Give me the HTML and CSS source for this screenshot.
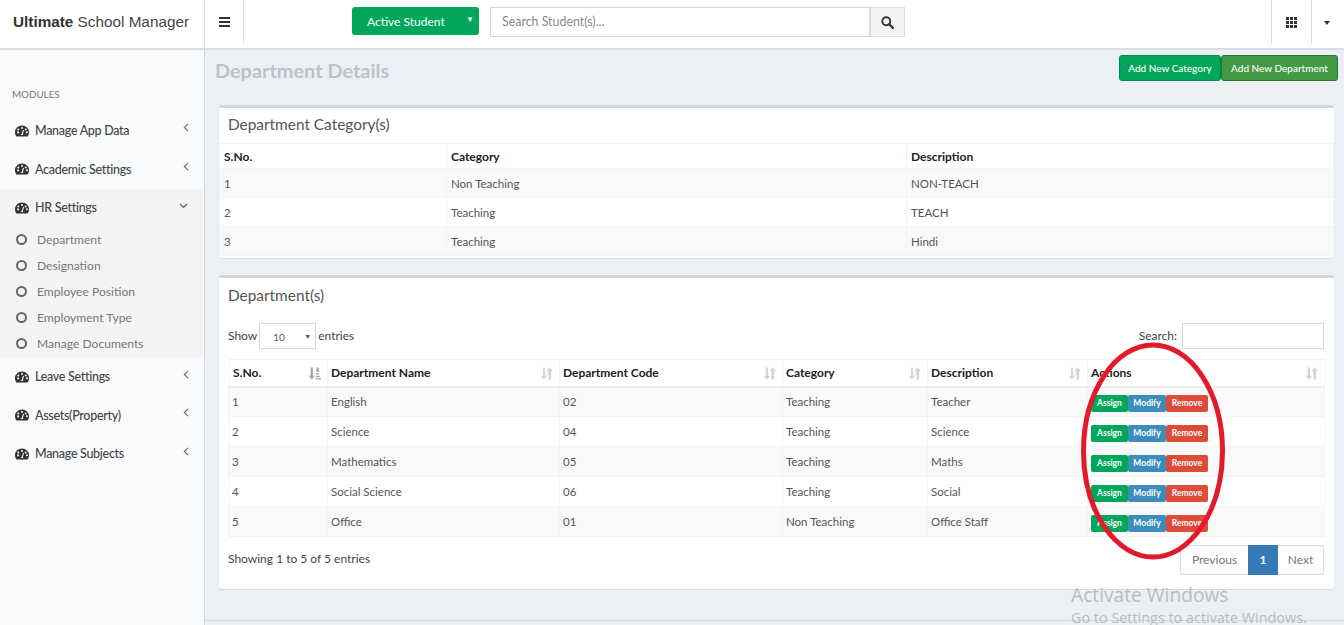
FILE: index.html
```html
<!DOCTYPE html>
<html lang="en">
<head>
<meta charset="utf-8">
<title>Department Details</title>
<link rel="stylesheet" href="styles.css">
</head>
<body>
<svg class="defs" width="0" height="0" aria-hidden="true">
  <symbol id="dash" viewBox="0 0 14 12">
    <path fill="currentColor" fill-rule="evenodd" d="M7 .5C3.100.5 0 3.500 0 7.200c0 1.700.6 3.200 1.500 4.300h11c.9-1.100 1.500-2.600 1.500-4.300C14 3.500 10.900.5 7 .5zM7 2a1 1 0 1 1 0 2 1 1 0 0 1 0-2zM3.300 3.500a1 1 0 1 1 0 2 1 1 0 0 1 0-2zM2.100 7.300a1 1 0 1 1 0 .01zM8.200 10H5.800c0-.7.4-1.200 1-1.300l1.200-4 1 .3-1.100 3.900c.2.300.3.700.3 1.100zM10.700 3.500a1 1 0 1 1 0 2 1 1 0 0 1 0-2zM11.900 6.300a1 1 0 1 1 0 2 1 1 0 0 1 0-2z"/>
  </symbol>
  <symbol id="sort" viewBox="0 0 14 13">
    <path fill="currentColor" d="M3 0h2.400v9H8l-3.800 4L.4 9H3zM9 4H6.800l3.700-4 3.700 4H12v9H9z"/>
  </symbol>
  <symbol id="sort-on" viewBox="0 0 14 13">
    <path fill="currentColor" d="M2.800 0h2.400v9h2.400l-3.600 4L.4 9h2.400zM9.500 0h2l.7 4.500H8.800zM9 6h2.500v1.700H9zM8.500 9h4v1.500h-4zM8 11.500h6V13H8z"/>
  </symbol>
  <symbol id="chev" viewBox="0 0 6 9">
    <path d="M5 .8L1.300 4.500 5 8.200" fill="none" stroke="currentColor" stroke-width="1.100"/>
  </symbol>
</svg>

<header class="topbar">
  <div class="brand"><b>Ultimate</b> School Manager</div>
  <div class="burger-cell"><span class="burger"><i></i><i></i><i></i></span></div>
  <div class="search-group">
    <div class="student-select"><span>Active Student</span><span class="caret-white">▼</span></div>
    <div class="search-input">Search Student(s)...</div>
    <div class="search-btn">
      <svg width="13" height="13" viewBox="0 0 13 13"><circle cx="5.300" cy="5.300" r="4" fill="none" stroke="#333" stroke-width="1.900"/><path d="M8.200 8.200l3.700 3.700" stroke="#333" stroke-width="2.300" stroke-linecap="round"/></svg>
    </div>
  </div>
  <div class="top-right">
    <div class="grid-cell"><span class="grid-ico"><i></i><i></i><i></i><i></i><i></i><i></i><i></i><i></i><i></i></span></div>
    <div class="caret-cell"><span class="caret-dark"></span></div>
  </div>
</header>

<div class="main">
  <aside class="sidebar">
    <div class="modules">MODULES</div>
    <nav>
      <a class="nav-item nav-first"><svg class="dash"><use href="#dash"/></svg><span>Manage App Data</span><svg class="chev"><use href="#chev"/></svg></a>
      <a class="nav-item"><svg class="dash"><use href="#dash"/></svg><span>Academic Settings</span><svg class="chev"><use href="#chev"/></svg></a>
      <div class="open-group">
        <a class="nav-item nav-open"><svg class="dash"><use href="#dash"/></svg><span>HR Settings</span><svg class="chev-down" width="9" height="6" viewBox="0 0 9 6"><path d="M1 1l3.500 3.500L8 1" fill="none" stroke="#555" stroke-width="1.100"/></svg></a>
        <a class="sub-item"><i class="ring"></i>Department</a>
        <a class="sub-item"><i class="ring"></i>Designation</a>
        <a class="sub-item"><i class="ring"></i>Employee Position</a>
        <a class="sub-item"><i class="ring"></i>Employment Type</a>
        <a class="sub-item"><i class="ring"></i>Manage Documents</a>
      </div>
      <a class="nav-item"><svg class="dash"><use href="#dash"/></svg><span>Leave Settings</span><svg class="chev"><use href="#chev"/></svg></a>
      <a class="nav-item"><svg class="dash"><use href="#dash"/></svg><span>Assets(Property)</span><svg class="chev"><use href="#chev"/></svg></a>
      <a class="nav-item"><svg class="dash"><use href="#dash"/></svg><span>Manage Subjects</span><svg class="chev"><use href="#chev"/></svg></a>
    </nav>
  </aside>

  <main class="content">
    <div class="page-head">
      <h1>Department Details</h1>
      <div class="head-btns">
        <a class="btn-add btn-cat">Add New Category</a>
        <a class="btn-add btn-dep">Add New Department</a>
      </div>
    </div>

    <section class="box box-cat">
      <h2>Department Category(s)</h2>
      <table class="cat-table">
        <thead><tr><th class="c1">S.No.</th><th class="c2">Category</th><th>Description</th></tr></thead>
        <tbody>
          <tr><td>1</td><td>Non Teaching</td><td>NON-TEACH</td></tr>
          <tr><td>2</td><td>Teaching</td><td>TEACH</td></tr>
          <tr><td>3</td><td>Teaching</td><td>Hindi</td></tr>
        </tbody>
      </table>
    </section>

    <section class="box box-dep">
      <h2>Department(s)</h2>
      <div class="dt-controls">
        <div class="dt-length">Show <span class="dt-select"><span>10</span><span class="sel-caret">▼</span></span> entries</div>
        <div class="dt-search">Search: <span class="dt-input"></span></div>
      </div>
      <table class="dep-table">
        <thead>
          <tr>
            <th class="d1">S.No.<svg class="sort sort-on"><use href="#sort-on"/></svg></th>
            <th class="d2">Department Name<svg class="sort"><use href="#sort"/></svg></th>
            <th class="d3">Department Code<svg class="sort"><use href="#sort"/></svg></th>
            <th class="d4">Category<svg class="sort"><use href="#sort"/></svg></th>
            <th class="d5">Description<svg class="sort"><use href="#sort"/></svg></th>
            <th>Actions<svg class="sort"><use href="#sort"/></svg></th>
          </tr>
        </thead>
        <tbody>
          <tr><td>1</td><td>English</td><td>02</td><td>Teaching</td><td>Teacher</td><td><div class="acts"><a class="act act-g">Assign</a><a class="act act-b">Modify</a><a class="act act-r">Remove</a></div></td></tr>
          <tr><td>2</td><td>Science</td><td>04</td><td>Teaching</td><td>Science</td><td><div class="acts"><a class="act act-g">Assign</a><a class="act act-b">Modify</a><a class="act act-r">Remove</a></div></td></tr>
          <tr><td>3</td><td>Mathematics</td><td>05</td><td>Teaching</td><td>Maths</td><td><div class="acts"><a class="act act-g">Assign</a><a class="act act-b">Modify</a><a class="act act-r">Remove</a></div></td></tr>
          <tr><td>4</td><td>Social Science</td><td>06</td><td>Teaching</td><td>Social</td><td><div class="acts"><a class="act act-g">Assign</a><a class="act act-b">Modify</a><a class="act act-r">Remove</a></div></td></tr>
          <tr><td>5</td><td>Office</td><td>01</td><td>Non Teaching</td><td>Office Staff</td><td><div class="acts"><a class="act act-g">Assign</a><a class="act act-b">Modify</a><a class="act act-r">Remove</a></div></td></tr>
        </tbody>
      </table>
      <div class="dt-foot">
        <div class="dt-info">Showing 1 to 5 of 5 entries</div>
        <div class="pager"><a class="pg pg-prev">Previous</a><a class="pg pg-cur">1</a><a class="pg pg-next">Next</a></div>
      </div>
    </section>
    <div class="footer-line"></div>
  </main>
</div>

<svg class="ellipse" width="160" height="230" viewBox="0 0 160 230" aria-hidden="true"><ellipse cx="80" cy="115" rx="69.500" ry="106" fill="none" stroke="#e11b2c" stroke-width="5"/></svg>
<div class="activate"><div class="a1">Activate Windows</div><div class="a2">Go to Settings to activate Windows.</div></div>
</body>
</html>
```

FILE: styles.css
```css
* { box-sizing: border-box; }
html, body { margin: 0; height: 625px; overflow: hidden; }
body { font-family: "Lato", "Open Sans", sans-serif; font-size: 12px; color: #333; background: #ecf0f5; position: relative; }
.defs { position: absolute; }
a { color: inherit; text-decoration: none; }

.topbar { height: 50px; background: #fff; border-bottom: 2px solid #d9dde2; display: flex; }
.brand { width: 205px; border-right: 1px solid #d9dde2; padding: 0 0 0 13px; font-family: "Liberation Sans", sans-serif; font-size: 15.300px; line-height: 44px; color: #444; white-space: nowrap; }
.brand b { color: #333; }
.burger-cell { width: 39px; height: 43px; border-right: 1px solid #d9dde2; display: flex; align-items: center; justify-content: center; }
.burger { display: flex; flex-direction: column; gap: 2px; width: 11px; }
.burger i { display: block; height: 2px; background: #333; }
.search-group { display: flex; margin-left: 108px; margin-top: 7px; height: 28px; }
.student-select { width: 127px; height: 28px; background: #00a65a; border-radius: 3px; color: #fff; font-size: 12px; display: flex; align-items: center; justify-content: space-between; padding: 0 5px 0 15px; }
.caret-white { font-size: 8px; margin-top: -4px; }
.search-input { width: 380px; height: 30px; margin-left: 11px; border: 1px solid #d2d6de; color: #888; font-size: 12.400px; line-height: 28px; padding-left: 11px; }
.search-btn { width: 35px; height: 30px; background: #f4f4f4; border: 1px solid #ddd; display: flex; align-items: center; justify-content: center; }
.top-right { margin-left: auto; display: flex; }
.grid-cell { width: 40px; height: 44px; border-left: 1px solid #d9dde2; display: flex; align-items: center; justify-content: center; }
.grid-ico { display: grid; grid-template-columns: repeat(3, 3px); grid-auto-rows: 3px; gap: 1px; }
.grid-ico i { background: #333; }
.caret-cell { width: 33px; height: 44px; border-left: 1px solid #d9dde2; display: flex; align-items: center; justify-content: center; padding-top: 2px; padding-right: 2px; }
.caret-dark { border: 3.500px solid transparent; border-top: 4px solid #333; border-bottom: 0; }

.main { display: flex; height: 575px; }
.sidebar { width: 205px; background: #f9fafc; border-right: 1px solid #d2d6de; flex: none; }
.modules { padding: 37px 0 0 12px; font-size: 9.800px; line-height: 14px; color: #777; height: 68px; }
nav { margin-top: -7px; padding-top: 0; }
.nav-item { display: flex; align-items: center; height: 38.500px; padding: 0 15px; font-size: 12.500px; letter-spacing: -.3px; font-weight: 500; color: #444; position: relative; }
.nav-first { height: 39px; }
.nav-open { height: 38px; }
.dash { width: 14px; height: 12px; color: #333; margin-right: 6px; flex: none; }
.chev { position: absolute; right: 15px; top: 12px; width: 6px; height: 9px; color: #666; }
.chev-down { position: absolute; right: 16px; top: 14px; }
.open-group { background: #f4f4f5; padding-bottom: 1px; }
.sub-item { display: flex; align-items: center; height: 26px; padding-left: 16px; color: #777; font-size: 12.100px; }
.ring { width: 11px; height: 11px; border: 2px solid #666; border-radius: 50%; margin-right: 10px; flex: none; }

.content { flex: 1; padding: 0 10px 0 14px; min-width: 0; position: relative; }
.page-head { display: flex; justify-content: space-between; height: 55px; padding-top: 5px; }
h1 { margin: 0 0 0 -4px; font-size: 19.900px; line-height: 31px; font-weight: 700; color: #bfc2c6; }
.head-btns { display: flex; margin-right: -4px; }
.btn-add { height: 26px; line-height: 24px; padding: 0 8px; font-size: 10px; color: #fff; border-radius: 3px; border: 1px solid; font-weight: 500; }
.btn-cat { width: 102px; background: #00a65a; border-color: #008d4c; padding: 0; text-align: center; }
.btn-dep { width: 117px; background: #439a45; border-color: #2f6f31; padding: 0; text-align: center; }

.box { background: #fff; border-top: 3px solid #d2d6de; border-radius: 3px; box-shadow: 0 1px 1px rgba(0,0,0,.1); }
.box-cat { height: 153px; margin-bottom: 17px; }
.box-dep { height: 314px; padding: 0 9px; }
h2 { margin: 0; font-size: 15.400px; font-weight: 400; color: #555; line-height: 20px; padding: 6px 9px 9px; }
.box-dep h2 { padding: 7px 0 0; height: 38px; }
table { border-collapse: collapse; table-layout: fixed; width: 100%; }
.cat-table th, .cat-table td { text-align: left; padding: 0 3px 0 4px; border: 1px solid #f4f4f4; }
.cat-table { font-size: 11.500px; }
.cat-table th { height: 25px; font-size: 12px; color: #222; font-weight: 700; }
.cat-table td { height: 29px; color: #555; }
.cat-table tbody tr:nth-child(odd) { background: #f9f9f9; }
.c1 { width: 227px; }
.c2 { width: 460px; }

.dt-controls { display: flex; justify-content: space-between; align-items: center; height: 27px; margin-top: 6px; }
.dt-length { display: flex; align-items: center; gap: 2px; color: #444; }
.dt-select { width: 57px; height: 26px; margin-top: 1px; border: 1px solid #d2d6de; display: flex; justify-content: space-between; align-items: center; padding: 2px 4px 0 13px; font-size: 10px; color: #555; }
.sel-caret { font-size: 7px; margin-top: -3px; }
.dt-search { display: flex; align-items: center; gap: 5px; margin-right: 1px; color: #444; }
.dt-input { width: 142px; height: 26px; margin-top: 1px; border: 1px solid #d2d6de; }

.dep-table { margin-top: 10px; font-size: 11.500px; }
.dep-table th { position: relative; height: 27px; text-align: left; padding: 0 5px 0 3px; font-size: 12px; font-weight: 700; color: #222; border: 1px solid #f4f4f4; border-bottom: 2px solid #eceef0; white-space: nowrap; }
.dep-table th:first-child { padding-left: 4px; }
.dep-table td { height: 30px; padding: 0 3px; color: #555; border: 1px solid #f4f4f4; }
.dep-table tbody tr:nth-child(odd) { background: #f9f9f9; }
.d1 { width: 99px; }
.d2 { width: 232px; }
.d3 { width: 223px; }
.d4 { width: 145px; }
.d5 { width: 160px; }
.sort { position: absolute; right: 6px; top: 7px; width: 13px; height: 13px; color: #d5d5d5; }
.sort-on { color: #a5a5a5; }
.acts { display: flex; margin-top: 3px; }
.act { height: 17px; line-height: 16px; font-size: 8.500px; font-weight: 700; color: #fff; text-align: center; border-radius: 2px; }
.act-g { width: 37px; background: #00a65a; }
.act-b { width: 38px; background: #3c8dbc; }
.act-r { width: 42px; background: #dd4b39; }

.dt-foot { display: flex; justify-content: space-between; margin-top: 8px; }
.dt-info { color: #444; line-height: 28px; }
.pager { display: flex; height: 30px; margin-right: 1px; line-height: 28px; font-size: 12px; text-align: center; color: #777; }
.pg { display: block; border: 1px solid #ddd; }
.pg-prev { width: 68px; border-radius: 3px 0 0 3px; border-right: 0; }
.pg-cur { width: 30px; background: #337ab7; border-color: #337ab7; color: #fff; font-weight: 700; }
.pg-next { width: 46px; border-radius: 0 3px 3px 0; border-left: 0; }
.footer-line { position: absolute; left: 0; right: 0; top: 570px; border-top: 1px solid #d2d6de; }

.ellipse { position: absolute; left: 1073px; top: 336px; pointer-events: none; }
.activate { position: absolute; left: 1071px; top: 583px; color: #b9bcc0; white-space: nowrap; }
.a1 { font-size: 19.200px; line-height: 24px; font-family: "Open Sans", sans-serif; }
.a2 { font-size: 14.400px; line-height: 21px; font-family: "Open Sans", sans-serif; }
```
